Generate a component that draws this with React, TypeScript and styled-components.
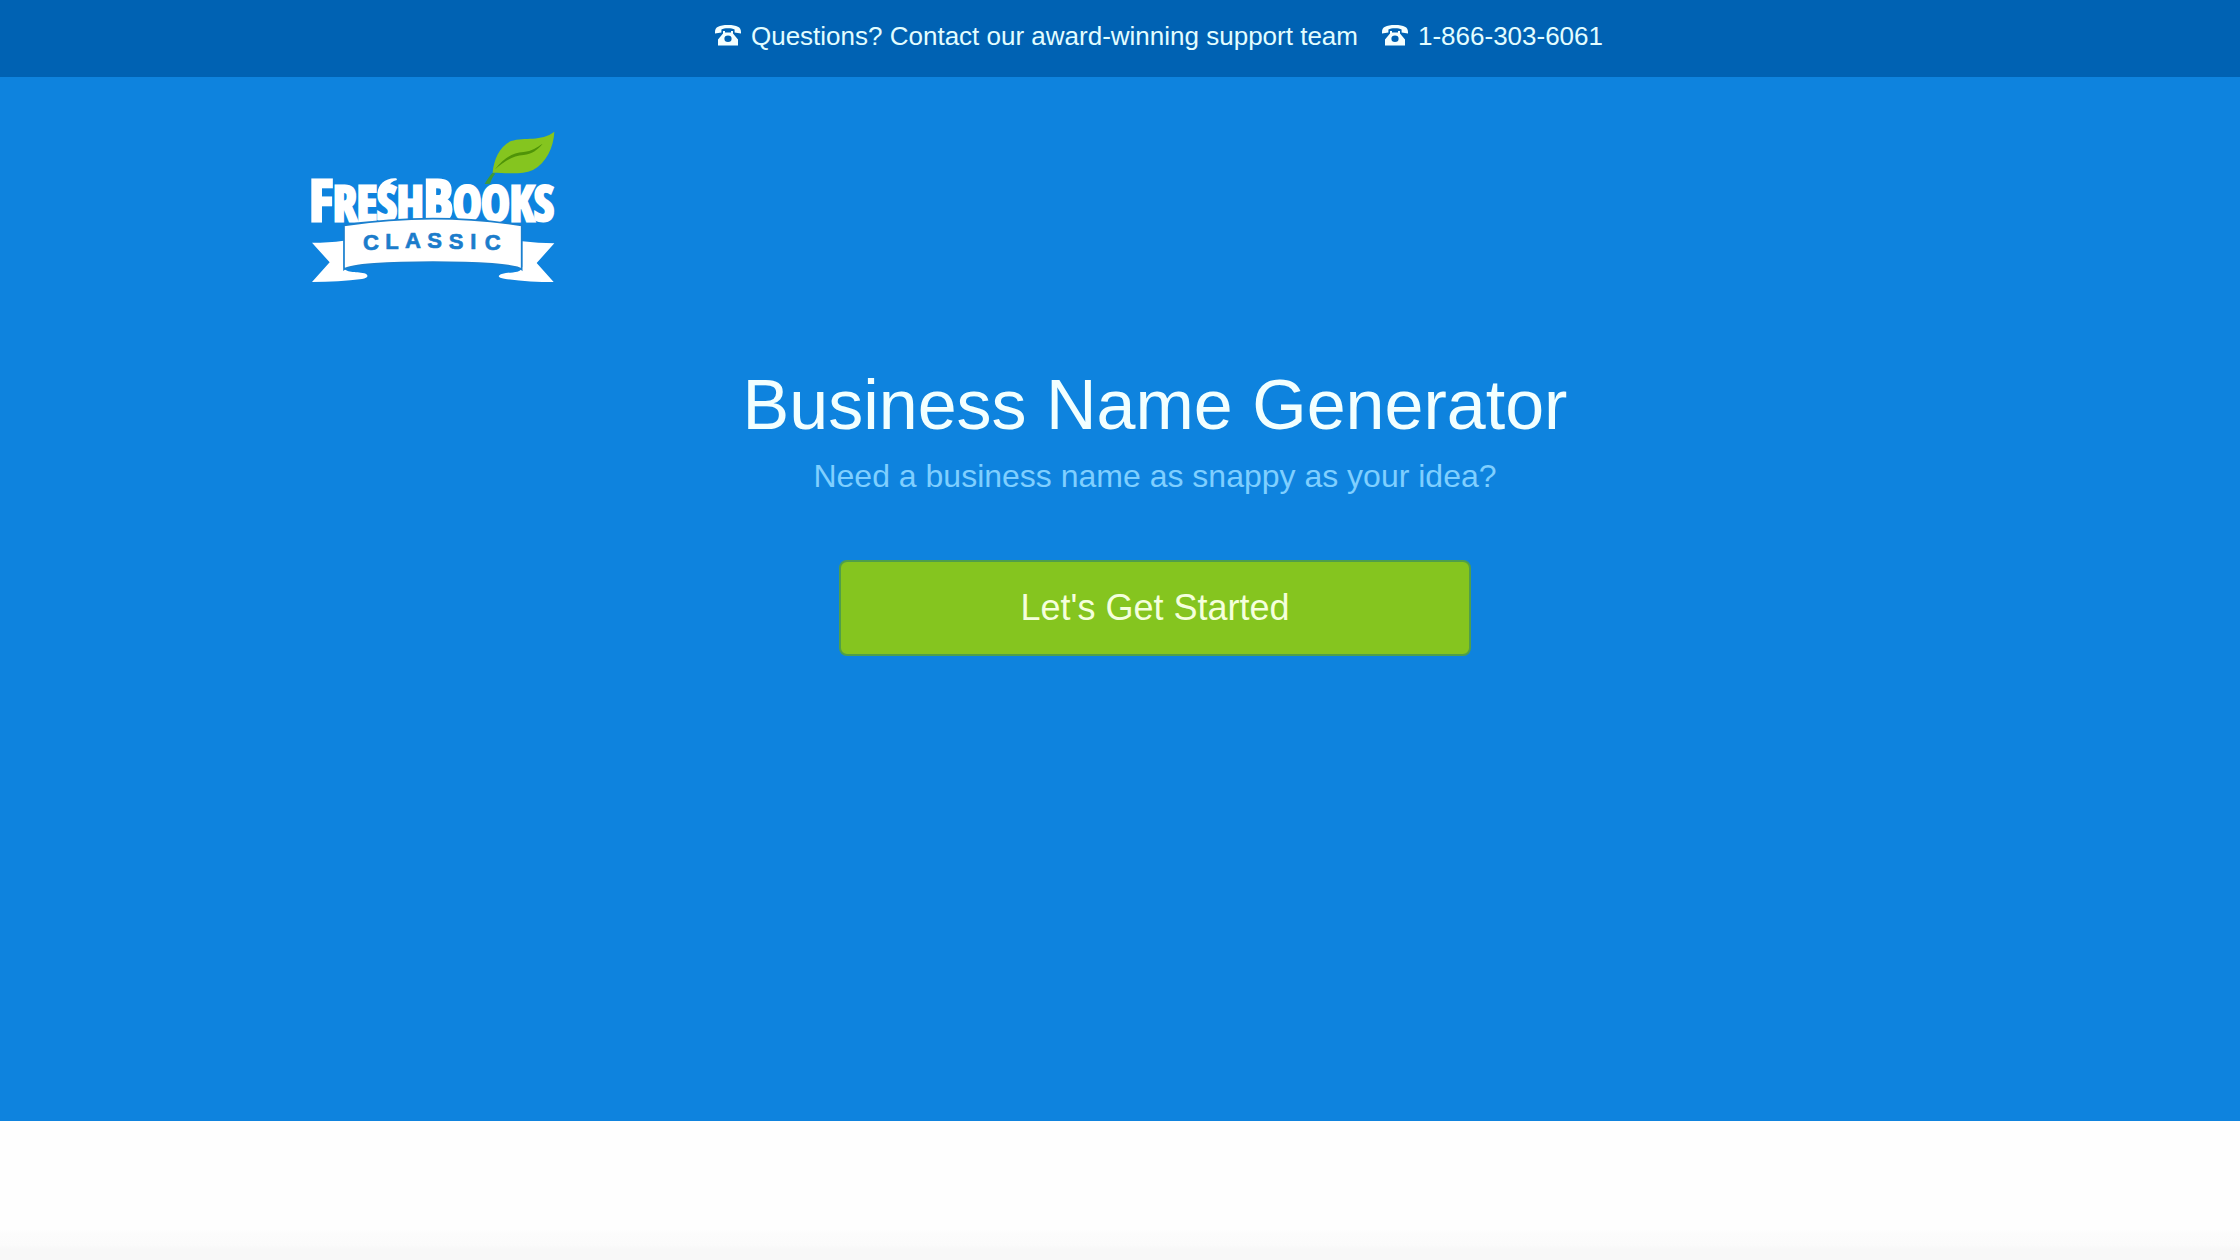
import React from "react";
import styled, { createGlobalStyle } from "styled-components";

const GlobalStyle = createGlobalStyle`
  *, *::before, *::after { box-sizing: border-box; }
  body {
    margin: 0;
    background: #fefefe;
    font-family: "Liberation Sans", Arial, sans-serif;
  }
`;

const SupportBar = styled.header`
  display: flex;
  justify-content: center;
  align-items: center;
  flex-wrap: wrap;
  gap: 24px;
  padding: 21px 0 26px 78px;
  background: #0062b3;
  color: #e2fdff;
  font-size: 26px;
  line-height: 30px;
`;

const SupportItem = styled.span`
  display: inline-flex;
  align-items: center;
  gap: 10px;
`;

const PhoneLink = styled.a`
  color: inherit;
  text-decoration: none;
`;

const PhoneGlyph = styled.svg`
  width: 26px;
  height: 22px;
  flex: none;
  margin-bottom: 2px;
  fill: #f4ffff;
`;

const Hero = styled.main`
  padding: 54px 241px 465px 311px;
  background: #0e83de;
`;

const LogoLink = styled.a`
  display: block;
  width: 244px;
`;

const LogoDrawing = styled.svg`
  display: block;
  width: 100%;
  height: auto;
  overflow: visible;
`;

const Wordmark = styled.text`
  font-family: "Open Sans Condensed", "Roboto Condensed", sans-serif;
  font-weight: 700;
  fill: #fff;
  stroke: #fff;
  stroke-width: 9px;
`;

const RibbonText = styled.text`
  font-family: "Liberation Sans", Arial, sans-serif;
  font-weight: 700;
  font-size: 66px;
  fill: #1b7ccb;
  stroke: #1b7ccb;
  stroke-width: 2px;
`;

const Pitch = styled.section`
  display: flex;
  flex-direction: column;
  align-items: center;
  padding-top: 80px;
  text-align: center;
`;

const Title = styled.h1`
  margin: 0;
  color: #f2ffff;
  font-size: 70px;
  font-weight: 400;
  line-height: 84px;
`;

const Tagline = styled.p`
  margin: 9px 0 64px;
  color: #7fcfff;
  font-size: 32px;
  line-height: 40px;
`;

const StartButton = styled.button`
  width: 632px;
  max-width: 100%;
  padding: 25px 24px;
  border: 2px solid #4f9f4a;
  border-radius: 8px;
  background: #85c51f;
  color: #f4ffdc;
  font-family: inherit;
  font-size: 36px;
  line-height: 42px;
  cursor: pointer;
`;

const NextSection = styled.div`
  height: 139px;
  background: linear-gradient(#fefefe 108px, #fcfcfc 112px, #fbfbfb 124px, #f8f8f8 128px);
`;

function PhoneIcon() {
  return (
    <PhoneGlyph viewBox="0 0 26 22" aria-hidden="true">
      <path d="M0 8C0 3 4 1 13 1s13 2 13 7v1.4l-6.4-1V5.6C18 4.6 16 4.3 13 4.3s-5 .3-6.600 1.300v2.800L0 9.400z" />
      <path
        fillRule="evenodd"
        d="M8 7h2v1.500h6V7h2v2.500l5 6V21.500H3V15.500l5-6zM13 11.600a3.600 3.200 0 1 0 0 6.400a3.600 3.200 0 1 0 0-6.400z"
      />
    </PhoneGlyph>
  );
}

function Logo() {
  return (
    <LogoDrawing viewBox="62 63 732 456" role="img" aria-label="FreshBooks Classic">
      <path fill="#3f9a35" d="M583 222c8-14 14-24 24-34l8 3c-8 8-12 18-16 30z" />
      <path
        fill="#85c51f"
        d="M607 188C610 150 628 108 662 93C704 80 752 96 792 65C790 112 768 158 728 180C690 196 644 188 607 188z"
      />
      <path
        fill="#4f9408"
        d="M614 178C640 145 664 129 700 126C724 123 740 112 757 101C742 120 724 132 700 135C666 138 644 152 614 178z"
      />
      <Wordmark x="57" y="332">
        <tspan fontSize="173">F</tspan>
        <tspan fontSize="143">RESH</tspan>
        <tspan fontSize="173">B</tspan>
        <tspan fontSize="143">OOKS</tspan>
      </Wordmark>
      <path
        fill="#fff"
        d="M262 250C262 222 288 202 318 205L320 210C306 213 298 220 294 232z"
      />
      <path
        fill="#fff"
        d="M65 398C98 398 130 396 160 392V470C164 490 196 483 222 490C238 496 232 504 215 507C170 513 118 516 65 516L118 457z"
      />
      <path
        fill="#fff"
        d="M792 400C760 400 728 398 696 394V470C692 492 660 484 634 492C618 498 626 504 642 506C688 513 740 516 790 516L739 459z"
      />
      <path
        fill="#fff"
        stroke="#1a7fce"
        strokeWidth="5"
        d="M161 346C250 333 330 326 428 326S606 333 694 346V478C680 464 560 456 428 456S178 464 161 478z"
      />
      <RibbonText x="218 285 344 411 475 540 583" y="420 417 415 415 416 418 420">
        CLASSIC
      </RibbonText>
    </LogoDrawing>
  );
}

export default function App() {
  return (
    <>
      <GlobalStyle />
      <SupportBar>
        <SupportItem>
          <PhoneIcon />
          Questions? Contact our award-winning support team
        </SupportItem>
        <SupportItem>
          <PhoneIcon />
          <PhoneLink href="tel:18663036061">1-866-303-6061</PhoneLink>
        </SupportItem>
      </SupportBar>
      <Hero>
        <LogoLink href="#">
          <Logo />
        </LogoLink>
        <Pitch>
          <Title>Business Name Generator</Title>
          <Tagline>Need a business name as snappy as your idea?</Tagline>
          <StartButton type="button">Let's Get Started</StartButton>
        </Pitch>
      </Hero>
      <NextSection />
    </>
  );
}
